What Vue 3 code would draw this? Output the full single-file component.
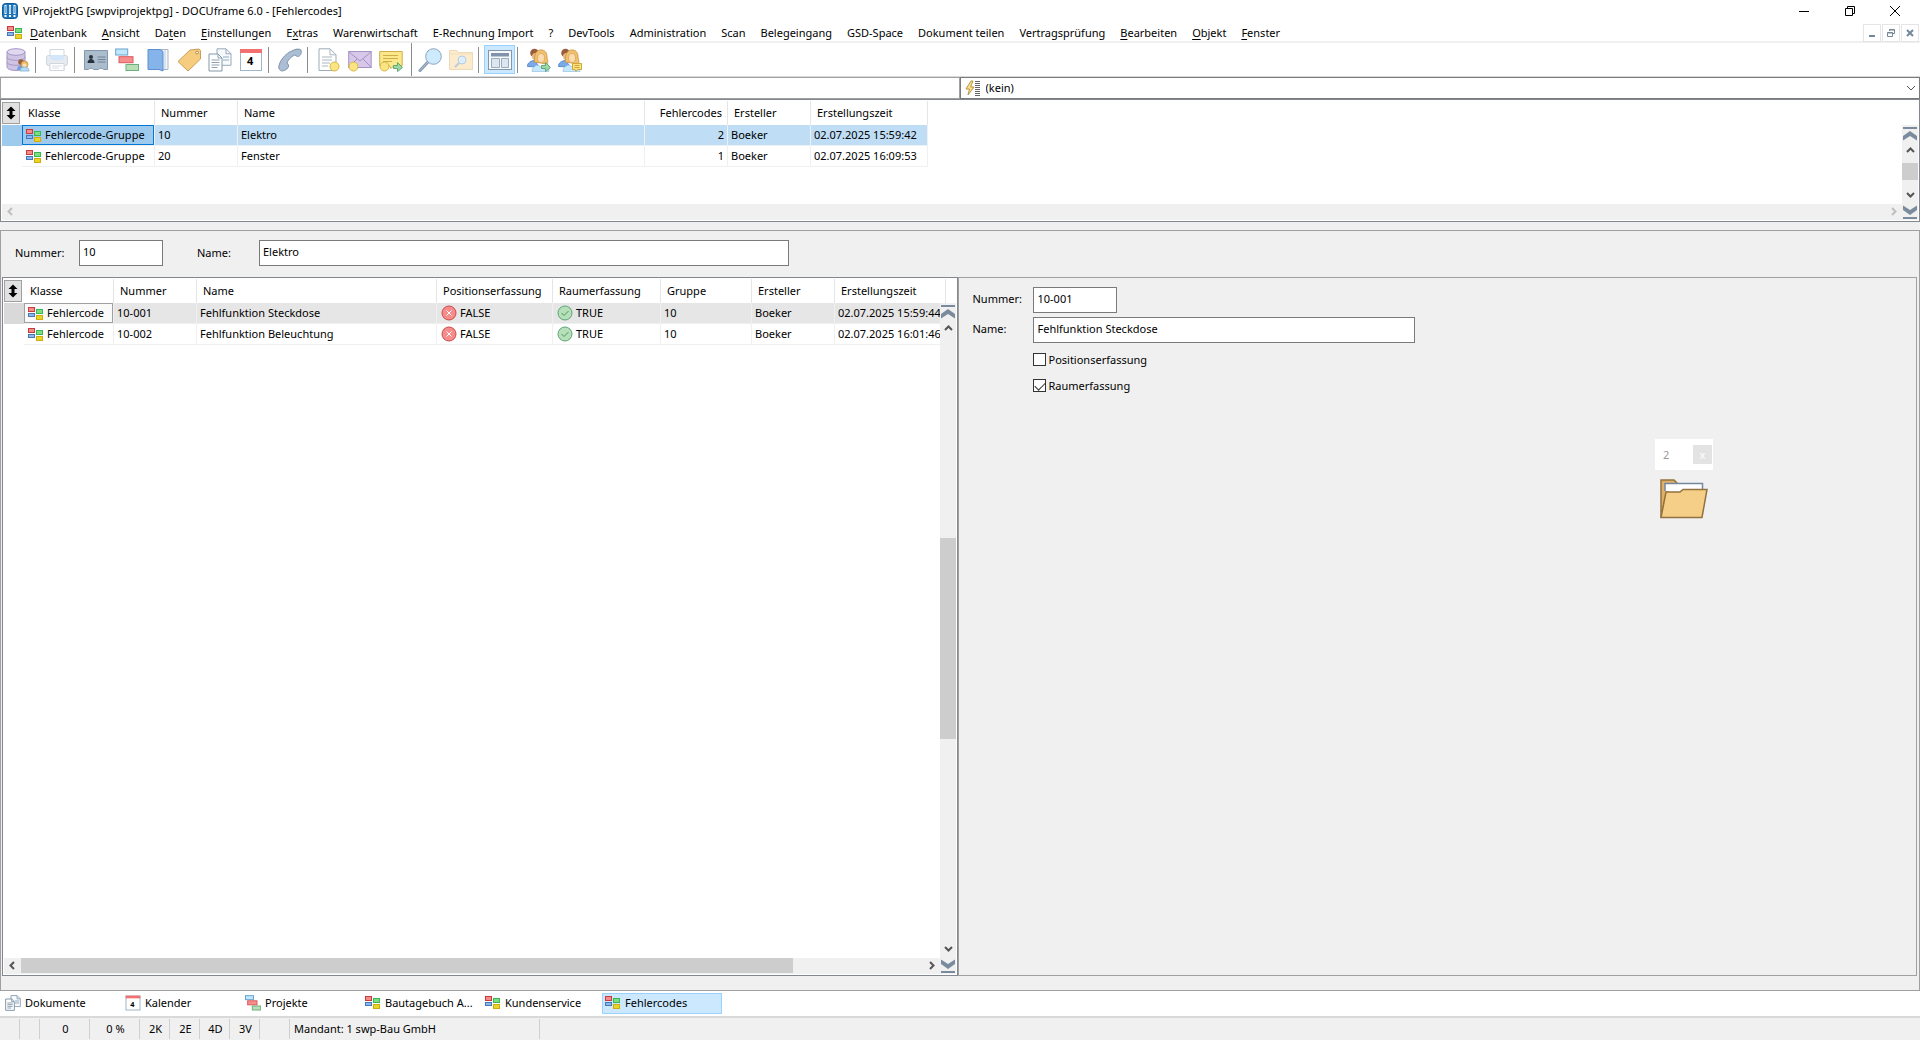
<script setup>
import { ref } from 'vue'

const menus = [
  ['', 'D', 'atenbank'], ['', 'A', 'nsicht'], ['Da', 't', 'en'], ['', 'E', 'instellungen'], ['E', 'x', 'tras'],
  ['Warenwirtschaft'], ['E-Rechnung Import'], ['?'], ['DevTools'], ['Administration'], ['Scan'],
  ['Belegeingang'], ['GSD-Space'], ['Dokument teilen'], ['Vertragsprüfung'],
  ['', 'B', 'earbeiten'], ['', 'O', 'bjekt'], ['', 'F', 'enster'],
]

const toolGroups = [
  [{ id: 'db', label: 'Datenbank' }],
  [{ id: 'print', label: 'Drucken', off: true }],
  [
    { id: 'card', label: 'Adressen' }, { id: 'project', label: 'Projekte' }, { id: 'book', label: 'Katalog' },
    { id: 'tag', label: 'Artikel' }, { id: 'docs', label: 'Dokumente' }, { id: 'cal', label: 'Kalender' },
  ],
  [{ id: 'phone', label: 'Telefon' }],
  [{ id: 'newdoc', label: 'Neues Dokument' }, { id: 'mail', label: 'Neue E-Mail' }, { id: 'note', label: 'Neue Notiz' }],
  [{ id: 'search', label: 'Suchen' }, { id: 'folder', label: 'Ordner durchsuchen', off: true }],
  [{ id: 'layout', label: 'Ansicht umschalten', on: true }],
  [{ id: 'users', label: 'Benutzer weiterleiten' }, { id: 'users2', label: 'Benutzer benachrichtigen' }],
]

const groups = {
  cols: [
    { t: 'Klasse', w: 133 }, { t: 'Nummer', w: 83 }, { t: 'Name', w: 407 },
    { t: 'Fehlercodes', w: 83, num: true }, { t: 'Ersteller', w: 83 }, { t: 'Erstellungszeit', w: 117 },
  ],
  rows: [
    ['Fehlercode-Gruppe', '10', 'Elektro', '2', 'Boeker', '02.07.2025 15:59:42'],
    ['Fehlercode-Gruppe', '20', 'Fenster', '1', 'Boeker', '02.07.2025 16:09:53'],
  ],
}
const codes = {
  cols: [
    { t: 'Klasse', w: 90 }, { t: 'Nummer', w: 83 }, { t: 'Name', w: 240 }, { t: 'Positionserfassung', w: 116 },
    { t: 'Raumerfassung', w: 108 }, { t: 'Gruppe', w: 91 }, { t: 'Ersteller', w: 83 }, { t: 'Erstellungszeit', w: 111 },
  ],
  rows: [
    ['Fehlercode', '10-001', 'Fehlfunktion Steckdose', 'FALSE', 'TRUE', '10', 'Boeker', '02.07.2025 15:59:44'],
    ['Fehlercode', '10-002', 'Fehlfunktion Beleuchtung', 'FALSE', 'TRUE', '10', 'Boeker', '02.07.2025 16:01:46'],
  ],
}
const width = (p) => p.cols.reduce((s, c) => s + c.w, 20)

const tabs = [
  { t: 'Dokumente', i: 'docs' }, { t: 'Kalender', i: 'cal' }, { t: 'Projekte', i: 'project' },
  { t: 'Bautagebuch A...', i: 'class' }, { t: 'Kundenservice', i: 'class' }, { t: 'Fehlercodes', i: 'class' },
]
const activeTab = ref('Fehlercodes')
const status = [
  { t: '', w: 20 }, { t: '', w: 20 }, { t: '0', w: 50 }, { t: '0 %', w: 50 }, { t: '2K', w: 30 }, { t: '2E', w: 30 },
  { t: '4D', w: 30 }, { t: '3V', w: 30 }, { t: '', w: 30 }, { t: 'Mandant: 1 swp-Bau GmbH', w: 250, left: true },
]

const groupNumber = ref('10')
const groupName = ref('Elektro')
const codeNumber = ref('10-001')
const codeName = ref('Fehlfunktion Steckdose')
const posCapture = ref(false)
const roomCapture = ref(true)
</script>

<template>
  <svg width="0" height="0" class="defs" aria-hidden="true">
    <symbol id="i-class" viewBox="0 0 16 14">
      <rect x=".5" y=".5" width="6" height="4" fill="#f58b8b" stroke="#c43c3c" />
      <rect x=".5" y="6.5" width="6" height="3" fill="#8cb8f0" stroke="#4878b8" />
      <rect x="8.500" y="2.500" width="6" height="4" fill="#7fdc7f" stroke="#33b855" />
      <rect x="8.500" y="8.500" width="6" height="4" fill="#ead424" stroke="#d0ac10" />
    </symbol>
    <symbol id="i-db" viewBox="0 0 24 24">
      <path d="M1 4v15c0 2 4 3.500 9 3.500s9-1.500 9-3.500V4z" fill="#cfc4e4" stroke="#a596c4" />
      <ellipse cx="10" cy="4" rx="9" ry="3.300" fill="#e0d8f0" stroke="#a596c4" />
      <path d="M1 9c0 2 4 3.300 9 3.300S19 11 19 9M1 14c0 2 4 3.300 9 3.300s9-1.300 9-3.300" fill="none" stroke="#a596c4" />
      <circle cx="15" cy="14" r="2.800" fill="#96603f" />
      <path d="M11 22c0-4 3-5 5-5v5z" fill="#6fa0e0" />
      <circle cx="18.500" cy="16.500" r="3.500" fill="#eebc68" stroke="#bf8a3c" stroke-width=".7" />
      <circle cx="18.500" cy="17.300" r="1.900" fill="#fde2bd" />
      <path d="M14 23c0-3 2-4 4.500-4s4.500 1 4.500 4z" fill="#b8dcf8" stroke="#77a6d0" stroke-width=".7" />
    </symbol>
    <symbol id="i-print" viewBox="0 0 24 24">
      <path d="M5 1.500h14V8H5zM5 16h14v6.500H5z" fill="#fff" stroke="#d0d6dd" />
      <rect x="1.500" y="7.500" width="21" height="10" rx="2" fill="#e7ebf0" stroke="#ccd4dd" />
      <path d="M5 7h14v4c-4 2-10 2-14 0z" fill="#d3e6fa" />
      <path d="M5 15.500h14v7H5z" fill="#fff" stroke="#d0d6dd" />
      <path d="M7 18h10M7 20h7" stroke="#d8dee5" />
    </symbol>
    <symbol id="i-card" viewBox="0 0 24 24">
      <path d="M.5 2.500h23v19h-4a3 3 0 0 0-5 0h-5a3 3 0 0 0-5 0h-4z" fill="#abbccd" stroke="#8496a9" />
      <circle cx="7" cy="9" r="2" fill="#28323d" /><path d="M3.500 15c0-3 2-4 3.500-4s3.500 1 3.500 4z" fill="#28323d" />
      <path d="M13.500 9h8M13.500 11.500h8M13.500 14h8" stroke="#71849a" />
    </symbol>
    <symbol id="i-project" viewBox="0 0 24 24">
      <rect x=".7" y="1" width="12" height="6" fill="#bfe9fb" stroke="#6aa2cf" />
      <rect x="4" y="8.700" width="14" height="6" fill="#f98d8d" stroke="#d85c5c" />
      <rect x="11" y="16.500" width="12.500" height="6" fill="#b6dfb6" stroke="#6fae80" />
    </symbol>
    <symbol id="i-book" viewBox="0 0 24 24">
      <path d="M12 1.500h10v20H12z" fill="#f3f6fa" stroke="#a9b6c5" /><path d="M19 2v19" stroke="#c5ced8" />
      <path d="M2 1.500h12l3 2V23l-4-1.500H2z" fill="#85b4ea" stroke="#5c8fce" />
    </symbol>
    <symbol id="i-tag" viewBox="0 0 24 24">
      <path d="M1 13.500L13 2l9-1 1.500 1.500V11L11 23z" fill="#f6cd7f" stroke="#c99d55" stroke-linejoin="round" />
      <circle cx="20" cy="4.500" r="1.400" fill="#fff" stroke="#b58a48" />
    </symbol>
    <symbol id="i-docs" viewBox="0 0 24 24">
      <path d="M9 .8h9l5 5v11.500H9z" fill="#f7fafc" stroke="#96a9bb" /><path d="M18 .8v5h5M15 9h6M15 12h6" fill="none" stroke="#96a9bb" />
      <path d="M1 6h9l4 4v13H1z" fill="#fff" stroke="#8497aa" />
      <path d="M10 6v4h4M3.500 12h8M3.500 14.500h8M3.500 17h8M3.500 19.500h6" fill="none" stroke="#8fa0b2" />
    </symbol>
    <symbol id="i-cal" viewBox="0 0 24 24">
      <rect x="1.500" y="1.500" width="21" height="21" fill="#fff" stroke="#9fb5c8" /><path d="M1 1h22v4H1z" fill="#f27070" />
    </symbol>
    <symbol id="i-phone" viewBox="0 0 24 24">
      <path d="M15 2.500c2-1.500 6-2 8-.5.800 3-.5 6.500-3.500 6.500l-3-1.500c-4 2-6.500 5-7.500 8l1.500 2c.5 3-2.500 5.500-6.500 6C2 22.500.5 21 .8 19 1 14 7 5 15 2.500z" fill="#abbed3" stroke="#7f95ad" />
    </symbol>
    <symbol id="i-newdoc" viewBox="0 0 24 24">
      <path d="M2 .8h11l6 6V22.500H2z" fill="#fff" stroke="#9dabb8" /><path d="M13 .8v6h6M5 9h10M5 12h10M5 15h8M5 18h6" fill="none" stroke="#a9b6c2" />
      <circle cx="17.500" cy="18.500" r="4.500" fill="#fbe582" stroke="#d8b548" />
    </symbol>
    <symbol id="i-mail" viewBox="0 0 24 24">
      <rect x=".7" y="3.500" width="22.500" height="16" fill="#d7c8ea" stroke="#a592c3" />
      <path d="M1 4l11 9L23 4M1 19l8-8M23 19l-8-8" fill="none" stroke="#a592c3" />
      <circle cx="5.500" cy="18.500" r="4.500" fill="#fbe582" stroke="#d8b548" />
    </symbol>
    <symbol id="i-note" viewBox="0 0 24 24">
      <path d="M.7 3.500h22.500v14H15l-3 3-2-3H.7z" fill="#fae88a" stroke="#cfae4a" />
      <path d="M4 7.500h15M4 10.500h15M4 13.500h9" stroke="#cfae4a" />
      <circle cx="5.500" cy="18.500" r="4.500" fill="#fbe582" stroke="#d8b548" />
      <path d="M14.500 17.500h4v-3l5 5-5 4v-3h-4z" fill="#9bd8a4" stroke="#62a877" />
    </symbol>
    <symbol id="i-search" viewBox="0 0 24 24">
      <path d="M10 14L2 22.500" stroke="#8297ad" stroke-width="3" stroke-linecap="round" /><path d="M10 14L2 22.500" stroke="#b6c5d5" stroke-linecap="round" />
      <circle cx="15.500" cy="8.500" r="7.800" fill="#cdebfc" stroke="#8ca4bd" />
    </symbol>
    <symbol id="i-folder" viewBox="0 0 24 24">
      <path d="M.5 2.500H8l1.500 2h14v17H.5z" fill="#fcebcc" stroke="#ecd9b8" /><path d="M.5 6h23" stroke="#f3dfbd" />
      <path d="M10 15l-4 4" stroke="#bccbdc" stroke-width="2" /><circle cx="13" cy="12" r="4" fill="#dbf0fd" stroke="#b8ccdf" />
    </symbol>
    <symbol id="i-layout" viewBox="0 0 24 24">
      <rect x=".5" y="2.500" width="23" height="19" fill="#f6f9fc" stroke="#8496a9" />
      <path d="M3 5h18v3.500H3z" fill="#8093aa" /><path d="M3.500 10.500h8v9h-8zM13.500 10.500h7v9h-7z" fill="#dbe6f0" stroke="#9cacbc" />
    </symbol>
    <symbol id="i-people" viewBox="0 0 24 24">
      <circle cx="7.500" cy="5" r="4.300" fill="#9a5c3c" /><circle cx="8.500" cy="8.500" r="3.500" fill="#e9b98d" />
      <path d="M.5 18.500c0-4 3-5.500 7-6l5 6.500z" fill="#78a9e8" stroke="#5c8fce" />
      <path d="M7 14c1-2 0-4 1-7 1-4 4-5.500 7-5 4 .5 5 4 5 7s2 4 0 7z" fill="#f0c06c" stroke="#c7903f" stroke-width=".8" />
      <ellipse cx="14" cy="10" rx="3.500" ry="4.500" fill="#fbdcae" stroke="#d09b54" stroke-width=".6" />
      <path d="M5 23.500c0-4 3-6 6-6.500l3 2 3-2c3 .5 5 2.500 5 6.500z" fill="#c6e8fc" stroke="#8cbce0" stroke-width=".6" />
    </symbol>
    <symbol id="i-users" viewBox="0 0 24 24">
      <use href="#i-people" width="24" height="24" /><path d="M14.500 17.500h4v-3l5 5-5 4v-3h-4z" fill="#9bd8a4" stroke="#62a877" />
    </symbol>
    <symbol id="i-users2" viewBox="0 0 24 24">
      <use href="#i-people" width="24" height="24" /><path d="M14.500 15.500h9v6h-4l-1.500 2-1-2h-2.500z" fill="#fbe27a" stroke="#cda73c" /><path d="M16.500 17.500h5M16.500 19.500h5" stroke="#cda73c" />
    </symbol>
    <symbol id="i-FALSE" viewBox="0 0 16 16">
      <circle cx="8" cy="8" r="7" fill="#f58b8b" stroke="#cc4a4a" /><path d="M5.500 5.500l5 5M10.500 5.500l-5 5" stroke="#fff" />
    </symbol>
    <symbol id="i-TRUE" viewBox="0 0 16 16">
      <circle cx="8" cy="8" r="7" fill="#b5e0b8" stroke="#5ea377" /><path d="M4.500 8l2.500 2.500 4.500-4.500" fill="none" stroke="#4f9468" />
    </symbol>
    <symbol id="i-arrow" viewBox="0 0 9 9"><path d="M1 6l3.500-3.500L8 6" fill="none" stroke="currentColor" stroke-width="2" /></symbol>
    <symbol id="i-jump" viewBox="0 0 14 14"><path d="M0 0h14v2H0zM7 4l7 5v4.500L7 9l-7 4.500V9z" fill="#7b8b9e" /></symbol>
    <symbol id="i-sort" viewBox="0 0 10 14"><path d="M5 .5l4.500 4.500H6.500v4h3L5 13.500.5 9h3V5h-3z" /></symbol>
  </svg>

  <div class="app">
    <header class="title">
      <svg width="16" height="16" viewBox="0 0 16 16">
        <rect x=".5" y=".5" width="15" height="15" rx="3" fill="#1c76bd" stroke="#135b98" />
        <path d="M3.500 2v9M8 2v9M12.500 2v9" stroke="#fff" stroke-width="2" /><path d="M3.500 12v2M8 12v2M12.500 12v2" stroke="#fff" stroke-width="2" />
        <path d="M3.500 3v7M8 3v7M12.500 3v7" stroke="#1c76bd" stroke-width=".6" />
      </svg>
      <h1>ViProjektPG [swpviprojektpg] - DOCUframe 6.0 - [Fehlercodes]</h1>
      <div class="win">
        <button aria-label="Minimieren"><svg width="12" height="12"><path d="M1 6.500h10" stroke="#000" /></svg></button>
        <button aria-label="Wiederherstellen"><svg width="12" height="12"><path d="M1.500 3.500h7v7h-7zM3.500 3V1.500h7v7H9" fill="none" stroke="#000" /></svg></button>
        <button aria-label="Schließen"><svg width="12" height="12"><path d="M1 1l10 10M11 1L1 11" stroke="#000" /></svg></button>
      </div>
    </header>

    <nav class="menu">
      <svg width="16" height="14"><use href="#i-class" /></svg>
      <div class="items">
        <button v-for="(m, i) in menus" :key="i">{{ m[0] }}<u v-if="m[1]">{{ m[1] }}</u>{{ m[2] }}</button>
      </div>
      <div class="mdi">
        <button aria-label="Fenster minimieren"><svg width="10" height="10"><path d="M2 8h6" stroke="#75879a" stroke-width="2" /></svg></button>
        <button aria-label="Fenster wiederherstellen"><svg width="10" height="10"><path d="M3.500 3V1.500h5v4H7M1.500 4.500h5v4h-5zM1.500 5h5M3.500 2h5" fill="none" stroke="#75879a" /></svg></button>
        <button aria-label="Fenster schließen"><svg width="10" height="10"><path d="M2 2l6 6M8 2L2 8" stroke="#75879a" stroke-width="2" /></svg></button>
      </div>
    </nav>

    <div class="toolbar">
      <div v-for="(g, i) in toolGroups" :key="i" class="group" :class="{ wide: i === 5 }">
        <button v-for="b in g" :key="b.id" :aria-label="b.label" :disabled="b.off" :class="{ on: b.on }">
          <svg width="24" height="24" viewBox="0 0 24 24"><use :href="'#i-' + b.id" /><text v-if="b.id === 'cal'" x="8" y="17">4</text></svg>
        </button>
      </div>
    </div>

    <div class="filter">
      <input aria-label="Suchbegriff">
      <div class="combo">
        <svg width="16" height="16"><path d="M6 1L1 9h3.500L3 15l6-8H5.500L8 1z" fill="#fbe58c" stroke="#b89540" /><path d="M10 1.500h5M10 3.500h5M10 5.500h5M10 7.500h5M10 9.500h5M10 11.500h5M10 13.500h5M10 15.500h5" stroke="#666" /></svg>
        <select aria-label="Filter"><option>(kein)</option></select>
        <svg width="10" height="6"><path d="M1 1l4 4 4-4" fill="none" stroke="#555" /></svg>
      </div>
    </div>

    <section class="pane top">
      <div class="view">
        <table :style="{ width: width(groups) + 'px' }">
          <colgroup><col class="mark"><col v-for="c in groups.cols" :key="c.t" :style="{ width: c.w + 'px' }"></colgroup>
          <thead><tr>
            <th class="sort"><button aria-label="Sortieren"><svg width="10" height="14"><use href="#i-sort" /></svg></button></th>
            <th v-for="c in groups.cols" :key="c.t" :class="{ num: c.num }">{{ c.t }}</th>
          </tr></thead>
          <tbody><tr v-for="(r, ri) in groups.rows" :key="ri" :class="{ sel: ri === 0 }">
            <td class="mark"></td>
            <td v-for="(v, ci) in r" :key="ci" :class="{ num: groups.cols[ci].num, cls: ci === 0 }"><div><svg v-if="ci === 0" width="16" height="14"><use href="#i-class" /></svg>{{ v }}</div></td>
          </tr></tbody>
        </table>
      </div>
      <div class="vbar">
        <button class="jump" aria-label="Zum Anfang"><svg width="14" height="14"><use href="#i-jump" /></svg></button>
        <button aria-label="Nach oben"><svg width="9" height="9"><use href="#i-arrow" /></svg></button>
        <div class="track"><div class="thumb"></div></div>
        <button class="down" aria-label="Nach unten"><svg width="9" height="9"><use href="#i-arrow" /></svg></button>
        <button class="jump down" aria-label="Zum Ende"><svg width="14" height="14"><use href="#i-jump" /></svg></button>
      </div>
      <div class="hbar off">
        <button class="l" aria-label="Nach links" disabled><svg width="9" height="9"><use href="#i-arrow" /></svg></button>
        <div class="track"></div>
        <button class="r" aria-label="Nach rechts" disabled><svg width="9" height="9"><use href="#i-arrow" /></svg></button>
      </div>
    </section>

    <main class="detail">
      <form class="group-form" @submit.prevent>
        <label for="gnum">Nummer:</label><input id="gnum" v-model="groupNumber" class="short">
        <label for="gname" class="second">Name:</label><input id="gname" v-model="groupName" class="long">
      </form>
      <div class="split">
        <section class="pane codes">
          <div class="view">
            <table :style="{ width: width(codes) + 'px' }">
              <colgroup><col class="mark"><col v-for="c in codes.cols" :key="c.t" :style="{ width: c.w + 'px' }"></colgroup>
              <thead><tr>
                <th class="sort"><button aria-label="Sortieren"><svg width="10" height="14"><use href="#i-sort" /></svg></button></th>
                <th v-for="c in codes.cols" :key="c.t">{{ c.t }}</th>
              </tr></thead>
              <tbody><tr v-for="(r, ri) in codes.rows" :key="ri" :class="{ sel: ri === 0 }">
                <td class="mark"></td>
                <td v-for="(v, ci) in r" :key="ci" :class="{ cls: ci === 0, flag: ci === 3 || ci === 4 }"><div><svg v-if="ci === 0" width="16" height="14"><use href="#i-class" /></svg><svg v-if="ci === 3 || ci === 4" width="16" height="16"><use :href="'#i-' + v" /></svg>{{ v }}</div></td>
              </tr></tbody>
            </table>
          </div>
          <div class="vbar">
            <button class="jump" aria-label="Zum Anfang"><svg width="14" height="14"><use href="#i-jump" /></svg></button>
            <button aria-label="Nach oben"><svg width="9" height="9"><use href="#i-arrow" /></svg></button>
            <div class="track"><div class="thumb"></div></div>
            <button class="down" aria-label="Nach unten"><svg width="9" height="9"><use href="#i-arrow" /></svg></button>
            <button class="jump down" aria-label="Zum Ende"><svg width="14" height="14"><use href="#i-jump" /></svg></button>
          </div>
          <div class="hbar">
            <button class="l" aria-label="Nach links"><svg width="9" height="9"><use href="#i-arrow" /></svg></button>
            <div class="track"><div class="thumb"></div></div>
            <button class="r" aria-label="Nach rechts"><svg width="9" height="9"><use href="#i-arrow" /></svg></button>
          </div>
        </section>
        <section class="editor">
          <form class="code-form" @submit.prevent>
            <label for="cnum">Nummer:</label><input id="cnum" v-model="codeNumber" class="short">
            <label for="cname">Name:</label><input id="cname" v-model="codeName">
            <div class="checks">
              <label><input v-model="posCapture" type="checkbox">Positionserfassung</label>
              <label><input v-model="roomCapture" type="checkbox">Raumerfassung</label>
            </div>
          </form>
          <aside class="attach">
            <div class="count"><span>2</span><button aria-label="Leeren" disabled>x</button></div>
            <svg width="48" height="40" viewBox="0 0 48 40">
              <path d="M1 38V1h13l3 3v4H8z" fill="#dfb068" stroke="#94723f" stroke-width="1.500" />
              <path d="M5 12V4.500h37.500V15" fill="#fff" stroke="#7488a0" stroke-width="1.500" />
              <path d="M1 38.500L6 13h14l3-2.500h24L42 38.500z" fill="#f5cf87" stroke="#94723f" stroke-width="1.500" />
            </svg>
          </aside>
        </section>
      </div>
    </main>

    <nav class="tabs">
      <button v-for="t in tabs" :key="t.t" :class="{ active: activeTab === t.t, bold: t.i !== 'class' }" @click="activeTab = t.t">
        <svg width="16" height="16" viewBox="0 0 24 24"><use :href="'#i-' + t.i" /><text v-if="t.i === 'cal'" x="8" y="18">4</text></svg>{{ t.t }}
      </button>
    </nav>
    <footer class="status">
      <span v-for="(s, i) in status" :key="i" :class="{ left: s.left }" :style="{ width: s.w + 'px' }">{{ s.t }}</span>
    </footer>
  </div>
</template>

<style>
body { background: #f0f0f0; }
</style>

<style scoped>
* { box-sizing: border-box; }
.defs { position: absolute; }
.app { display: flex; flex-direction: column; min-height: 100vh; background: #f0f0f0; color: #000; font: 11px/16px "Noto Sans", "Open Sans", sans-serif; }
button, input, select { font: inherit; color: inherit; margin: 0; padding: 0; border: 0; border-radius: 0; background: none; }
svg { display: block; flex: none; }
svg text { font-size: 11px; font-weight: 700; }
input { background: #fff; border: 1px solid #7a7a7a; height: 26px; padding: 0 3px 3px; min-width: 0; }

.title { display: flex; align-items: center; height: 24px; padding: 0 3px 2px 2px; background: #fff; }
.title h1 { flex: 1; margin: 0 0 0 5px; font-size: 11px; font-weight: 400; }
.win { display: flex; }
.win button { display: grid; place-items: center; width: 45px; height: 20px; }
.win button:first-child { width: 46px; }

.menu { display: flex; align-items: center; height: 19px; padding: 0 1px 0 7px; background: #fff; border-bottom: 2px solid #f0f0f0; white-space: nowrap; }
.items { display: flex; flex: 1; gap: 15px; margin-left: 7px; }
.items u { text-underline-offset: 2px; }
.mdi { display: flex; gap: 1px; }
.mdi button { display: grid; place-items: center; width: 18px; height: 18px; border: 1px solid #e5e5e5; }

.toolbar { display: flex; height: 34px; padding-left: 2px; background: #fff; border-bottom: 1px solid #d9d9d9; }
.group { display: flex; align-items: center; }
.group + .group::before { content: ""; width: 1px; height: 26px; margin: 0 5px 0 2px; background: #8c8c8c; }
.group.wide::before { height: 33px; margin: 0 2px 0 5px; }
.group button { display: grid; place-items: center; width: 31px; height: 29px; }
.group button.on { background: #cce8ff; border: 1px solid #99d1ff; }

.filter { display: flex; height: 22px; }
.filter > * { flex: 1 1 0; height: 22px; }
.filter > input { border-color: #a0a0a0; }
.combo { display: flex; align-items: center; border: 1px solid #7a7a7a; background: #fff; padding: 0 3px 0 4px; }
.combo select { flex: 1; appearance: none; padding-left: 5px; outline: 0; }

.pane { display: grid; grid-template-columns: minmax(0, 1fr) 16px; grid-template-rows: 24px minmax(0, 1fr) 16px; background: #fff; border: 1px solid #828790; padding: 1px; }
.top { height: 123px; }
.view { grid-area: 1 / 1 / 3 / 3; overflow: hidden; }
.vbar { grid-area: 2 / 2 / 4 / 3; display: flex; flex-direction: column; align-items: stretch; background: #f0f0f0; }
.hbar { grid-area: 3 / 1 / 4 / 2; display: flex; background: #f0f0f0; }
.vbar button, .hbar button { display: grid; place-items: center; width: 16px; height: 17px; color: #555; }
.hbar button { height: 15px; width: 17px; }
.hbar.off button { color: #bfbfbf; }
.down svg { transform: rotate(180deg); }
.l svg { transform: rotate(-90deg); }
.r svg { transform: rotate(90deg); }
.track { flex: 1; display: flex; }
.vbar .track { flex-direction: column; }
.thumb { background: #cdcdcd; flex: none; }
.top .vbar .thumb { height: 17px; margin-top: 4px; }
.codes .vbar .thumb { height: 201px; margin-top: 201px; }
.codes .hbar .thumb { width: 772px; height: 15px; }

table { table-layout: fixed; border-collapse: separate; border-spacing: 0; }
col.mark { width: 20px; }
th, td { padding: 0; white-space: nowrap; overflow: hidden; text-align: left; font-weight: 400; }
th { height: 24px; padding: 0 5px 0 6px; border-right: 1px solid #e5e5e5; }
th.num, td.num { text-align: right; }
th.sort { padding: 0; border: 0; }
.sort button { display: grid; place-items: center; width: 18px; height: 22px; background: #e1e1e1; border: 1px solid #a0a0a0; }
td { height: 21px; border-right: 1px solid #f0f0f0; border-bottom: 1px solid #f0f0f0; }
td.mark { border: 0; }
td div { height: 20px; line-height: 19px; padding: 0 3px; }
td.cls div, td.flag div { display: flex; align-items: center; gap: 3px; padding: 0 3px 1px 4px; }
td.cls svg { margin-top: 2px; }
.sel td { background: #bfddf5; }
.sel td.mark { background: #9ecaee; }
.sel td.cls div { background: #9ecaee; border: 1px solid #0078d7; padding: 0 2px 1px 3px; line-height: 17px; }
.codes .sel td { background: #e6e6e6; }
.codes .sel td.mark { background: #d9d9d9; }
.codes .sel td.cls div { background: #f9f9f9; border-color: #a0a0a0; }

.detail { flex: 1; display: flex; flex-direction: column; margin-top: 8px; padding: 1px 2px 14px 1px; border: 1px solid #a0a0a0; }
.group-form { display: flex; align-items: center; height: 45px; padding: 0 0 3px 13px; }
.group-form label { width: 64px; }
.group-form label.second { width: 62px; margin-left: 34px; }
.short { width: 84px; }
.long { width: 530px; }
.split { flex: 1; display: grid; grid-template-columns: minmax(0, 956fr) minmax(0, 958fr); }
.editor { display: flex; justify-content: space-between; border: 1px solid #a0a0a0; padding: 9px 203px 0 13px; }
.code-form { display: grid; grid-template-columns: 61px 382px; grid-auto-rows: 26px; row-gap: 4px; align-content: start; }
.code-form > label { line-height: 24px; }
.checks { grid-column: 2; }
.checks label { display: flex; align-items: center; gap: 2px; height: 26px; padding-bottom: 1px; }
.checks input { display: grid; place-items: center; appearance: none; width: 13px; height: 13px; padding: 0; border: 1px solid #333; }
.checks input:checked::before { content: ""; width: 9px; height: 5px; border: solid #333; border-width: 0 0 1px 1px; transform: translateY(-1px) rotate(-45deg); }
.attach { display: flex; flex-direction: column; align-items: center; gap: 9px; padding-top: 152px; }
.count { display: flex; align-items: center; justify-content: space-between; width: 58px; height: 31px; padding: 0 1px 0 8px; background: #fff; color: #999; }
.count button { width: 19px; height: 19px; background: #e3e3e3; color: #fff; line-height: 14px; }

.tabs { display: flex; height: 27px; padding: 2px; background: #fff; border-bottom: 2px solid #d9d9d9; }
.tabs button { display: flex; align-items: center; gap: 4px; width: 120px; height: 21px; padding: 0 0 1px 2px; white-space: nowrap; border: 1px solid transparent; }
.tabs .bold svg { stroke-width: 1.5px; }
.tabs svg text { stroke: none; }
.tabs .active { background: #cce8ff; border-color: #99d1ff; }
.status { display: flex; height: 22px; padding: 1px 0; }
.status span { padding-left: 2px; border-right: 1px solid #d0d0d0; text-align: center; line-height: 20px; }
.status .left { text-align: left; padding-left: 4px; }
</style>
